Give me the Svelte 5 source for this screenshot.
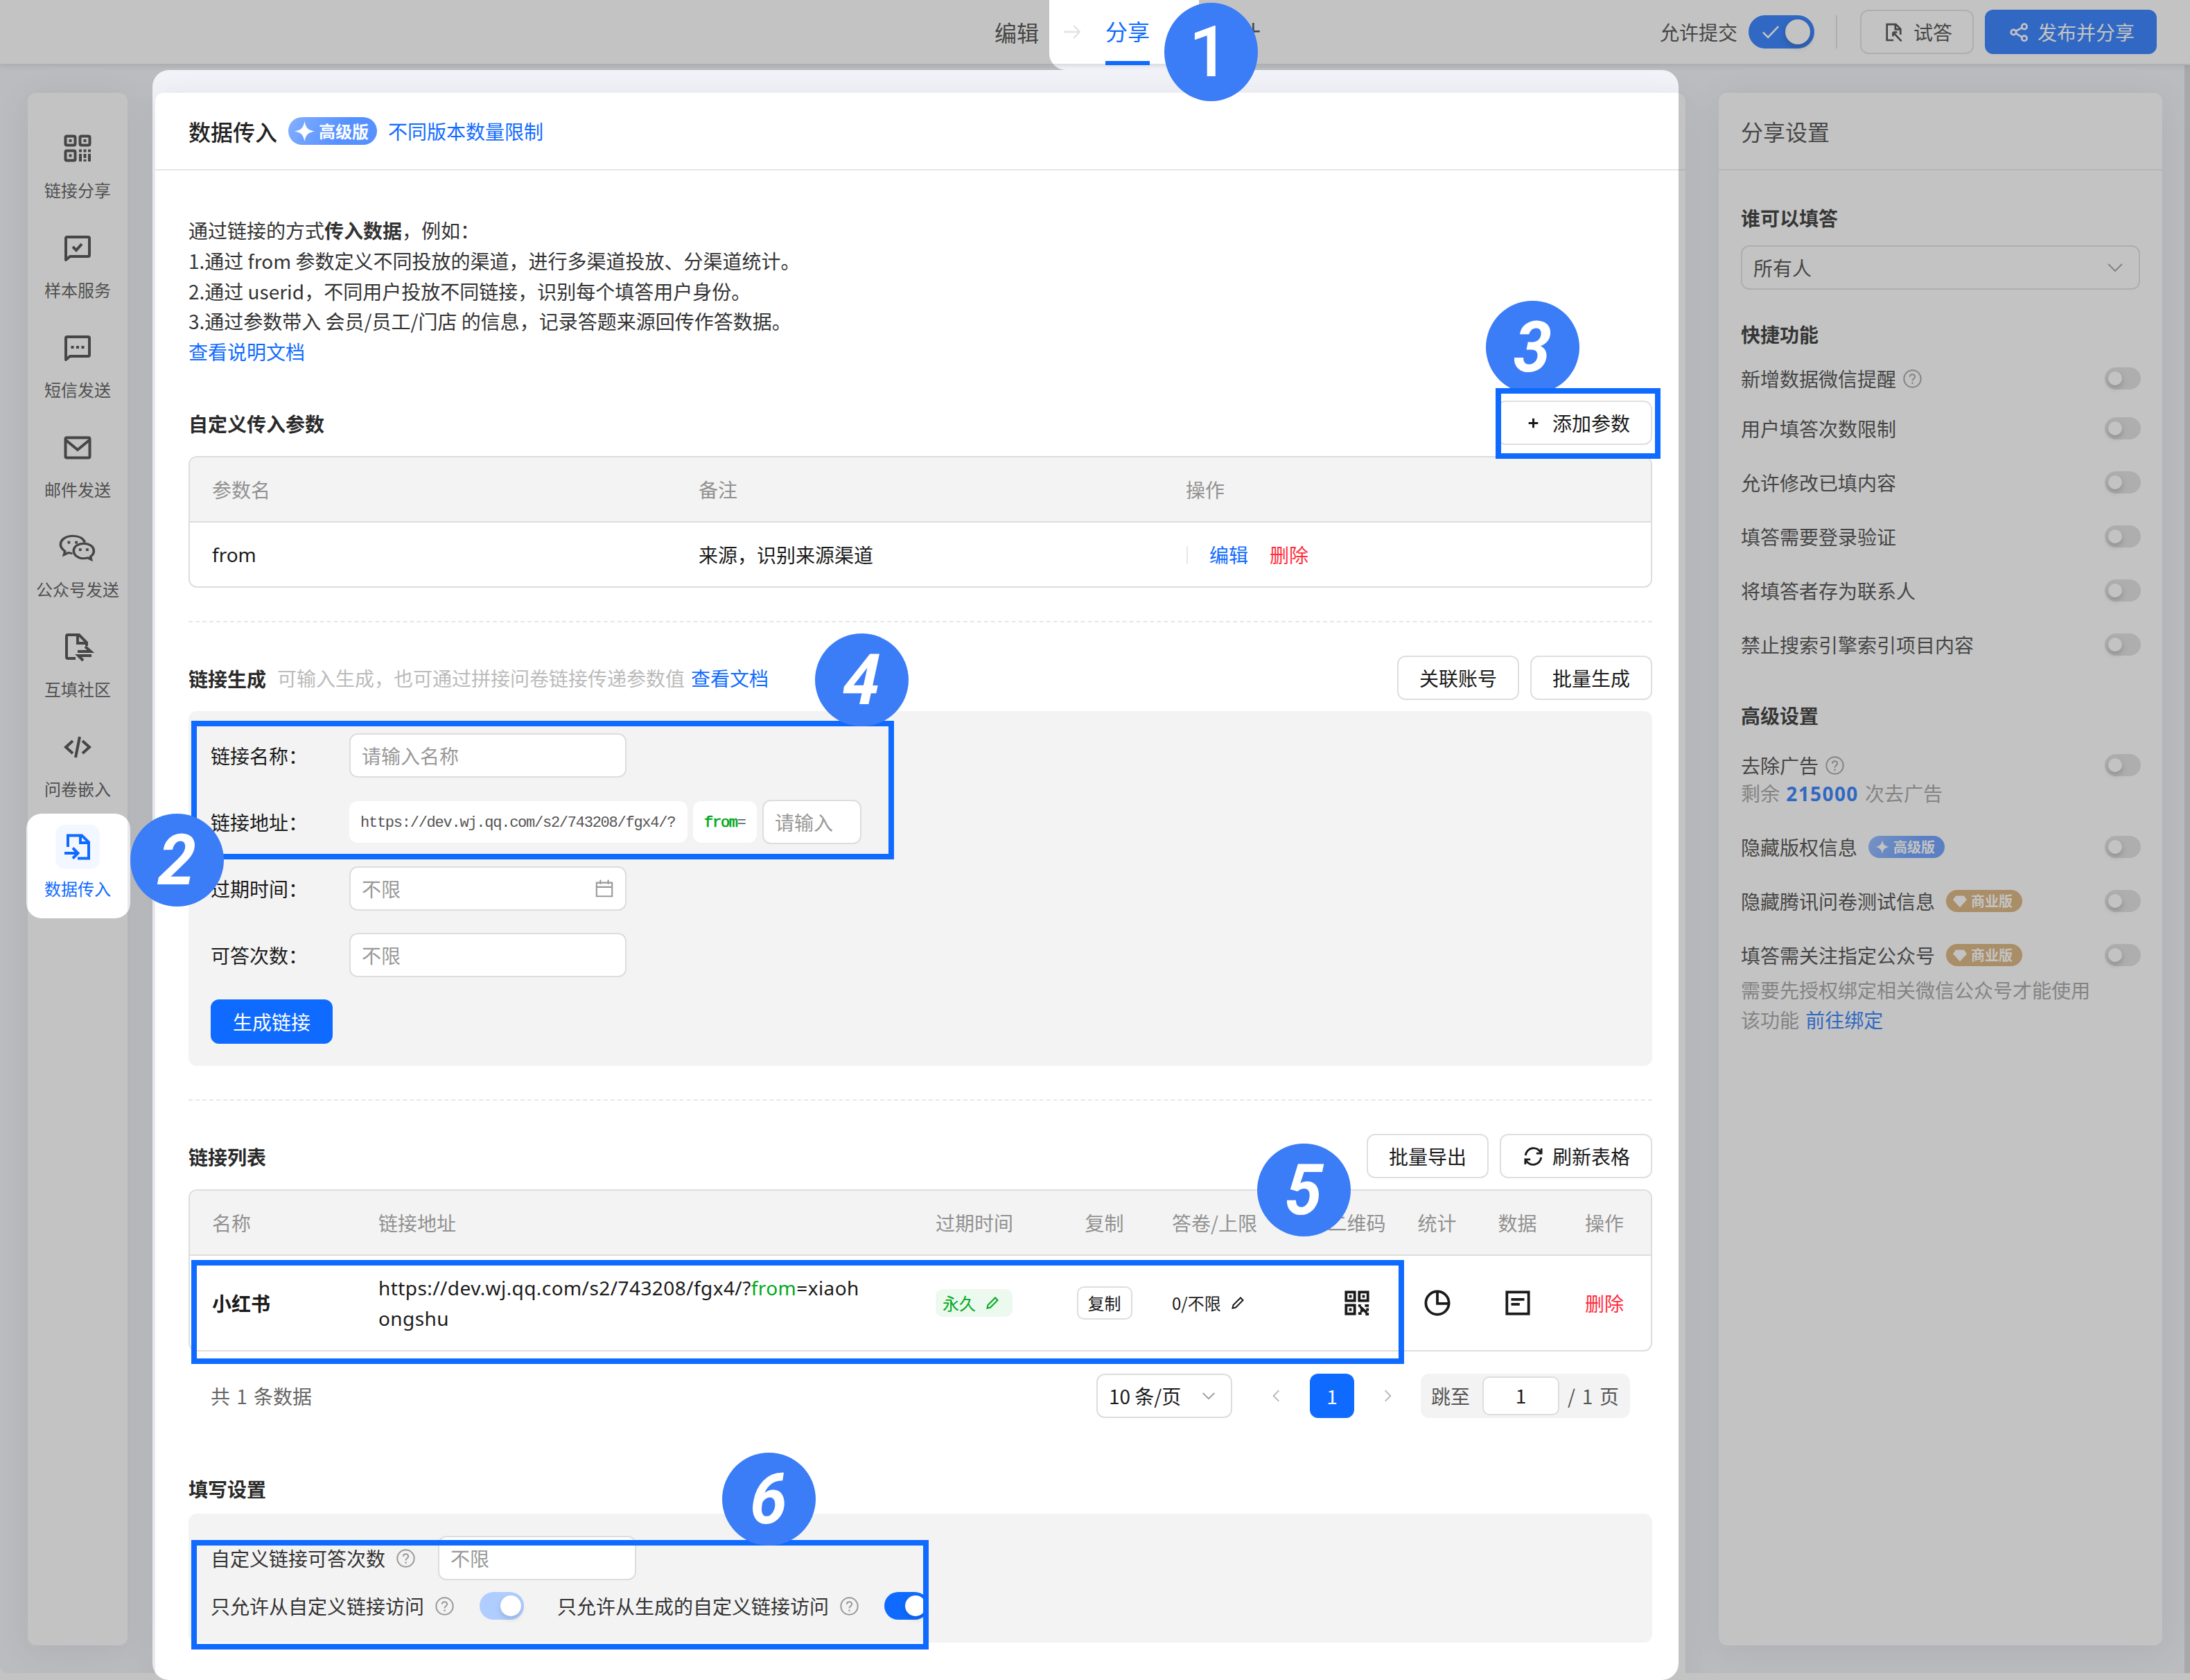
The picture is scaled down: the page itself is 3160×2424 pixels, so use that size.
<script>
  const nav = [
    { icon: 'qr', label: '链接分享' },
    { icon: 'check', label: '样本服务' },
    { icon: 'sms', label: '短信发送' },
    { icon: 'mail', label: '邮件发送' },
    { icon: 'wechat', label: '公众号发送' },
    { icon: 'swap', label: '互填社区' },
    { icon: 'code', label: '问卷嵌入' },
    { icon: 'import', label: '数据传入', active: true }
  ];
  const quick = [
    { label: '新增数据微信提醒', help: true },
    { label: '用户填答次数限制' },
    { label: '允许修改已填内容' },
    { label: '填答需要登录验证' },
    { label: '将填答者存为联系人' },
    { label: '禁止搜索引擎索引项目内容' }
  ];
</script>

{#snippet icon(name)}
  <svg class="ico" viewBox="0 0 40 40" fill="none" stroke="currentColor" stroke-width="4">
    {#if name === 'qr'}
      <rect x="2.500" y="2.500" width="14" height="13" rx="2" /><rect x="23.500" y="2.500" width="14" height="13" rx="2" /><rect x="2.500" y="23.500" width="14" height="14" rx="2" />
      <path d="M9.500 7v4M30.500 7v4M9.500 28.500v4M24 21.500v4M30.500 21.500v4M37 21.500v4M24 28v11M30.500 28v6M37 28v11M30.500 36v3" />
    {:else if name === 'check'}
      <path d="M3 37V6a2 2 0 0 1 2-2h30a2 2 0 0 1 2 2v24a2 2 0 0 1-2 2H9z" stroke-linejoin="round" /><path d="M13 18l5 5 8-9" />
    {:else if name === 'sms'}
      <path d="M3 37V6a2 2 0 0 1 2-2h30a2 2 0 0 1 2 2v24a2 2 0 0 1-2 2H9z" stroke-linejoin="round" /><path d="M10.500 19h4M18 19h4M25.500 19h4" stroke-width="4" />
    {:else if name === 'mail'}
      <rect x="2.500" y="5.500" width="35" height="29" rx="2" /><path d="M3 9l17 14L37 9" />
    {:else if name === 'wechat'}
      <g transform="translate(-4 0) scale(1.200 1)" stroke-width="2.900">
        <path d="M14 28c-1.500 0-3-.3-4.500-.9L4.500 30l1-4.800C2.500 22.500.500 19.500.500 16 .500 9 6.500 4 14.500 4c6.500 0 12 3 13.800 9" />
        <path d="M27 14.500c-6.500 0-11.500 4.200-11.500 10S20.500 35 27 35c1.500 0 3-.3 4.500-.8l4 2.300-.8-4c2.400-2 3.800-4.800 3.800-7.800 0-6-5-10.200-11.500-10.200z" />
        <path d="M8.500 13h3M17 13h3M21.500 23h3M29.500 23h3" stroke-width="3.500" />
      </g>
    {:else if name === 'swap'}
      <path d="M17 36H6a2 2 0 0 1-2-2V4a2 2 0 0 1 2-2h16l11 11v5M20 2v12h13" /><path d="M20 26h19l-8-7M40 32H21l7 7" />
    {:else if name === 'code'}
      <path d="M13 11L3 20l10 9M27 11l10 9-10 9M23 5l-6 30" />
    {:else if name === 'import'}
      <path d="M6 20V3.500h20l10 9.500v23.500H20M24 3v11h12M1 29h19M13 21.500l7.500 7.500-7.500 7.500" />
    {:else if name === 'qr2'}
      <rect x="3.500" y="3.500" width="13" height="13" /><rect x="23.500" y="3.500" width="13" height="13" /><rect x="3.500" y="23.500" width="13" height="13" />
      <path d="M10 8v4M30 8v4M10 28v4M22 24h4M32 24h6M25 26l10 9M22 36h5M27 30v4M33 37h5M36 28v4" />
    {:else if name === 'pie'}
      <circle cx="20" cy="20" r="17.500" /><path d="M20 3v18h17" />
    {:else if name === 'doc'}
      <rect x="3.500" y="3.500" width="33" height="33" /><path d="M10 14.500h20M10 22h13" />
    {:else if name === 'pencil'}
      <path d="M5 35l2-9L28 5l7 7-21 21z" />
    {:else if name === 'refresh'}
      <path d="M36 4v10H26M4 36V26h10" /><path d="M4.500 18A16 16 0 0 1 35 13M35.500 22A16 16 0 0 1 5 27" />
    {:else if name === 'calendar'}
      <path d="M4 8h32v28H4zM4 17h32M12 2v9M28 2v9" />
    {:else if name === 'down'}
      <path d="M6 13l14 14 14-14" />
    {:else if name === 'left'}
      <path d="M26 6L12 20l14 14" />
    {:else if name === 'right'}
      <path d="M14 6l14 14-14 14" />
    {:else if name === 'arrow'}
      <path d="M0 20h37M24 5l14 15-14 15" />
    {:else if name === 'plus'}
      <path d="M20 4v32M4 20h32" stroke-width="7" />
    {:else if name === 'tick'}
      <path d="M3 21l11 11L37 8" />
    {:else if name === 'try'}
      <path d="M18 37H4V3h19l10 10v12M22 3v11h11M17 20l18 19M17 20h9M17 20v9" />
    {:else if name === 'share'}
      <circle cx="8" cy="20" r="5.500" /><circle cx="31" cy="8" r="5.500" /><circle cx="31" cy="33" r="5.500" /><path d="M13 17.500l13-7M13 22.500l13 8" />
    {:else if name === 'help'}
      <circle cx="20" cy="20" r="18" stroke-width="3" /><path d="M14.500 16c0-7 11-7 11-.5 0 4-5.500 4.500-5.500 9M20 27.500v3.500" stroke-width="3" />
    {/if}
  </svg>
{/snippet}

{#snippet badge(kind, text)}
  <span class="badge {kind}">
    <svg viewBox="0 0 24 24" fill="#fff">
      {#if kind === 'biz'}<path d="M5 3h14l5 7-12 13L0 10z" />{:else}<path d="M12 0c1.500 8 4 10.500 12 12-8 1.500-10.500 4-12 12-1.500-8-4-10.500-12-12 8-1.500 10.500-4 12-12z" />{/if}
    </svg>{text}
  </span>
{/snippet}

{#snippet help()}<i class="help">{@render icon('help')}</i>{/snippet}

<div class="app">
  <header class="top">
    <nav class="tabs">
      <span>编辑</span><i class="sep">{@render icon('arrow')}</i><span class="on">分享</span><i class="sep">{@render icon('arrow')}</i><span>统计</span>
    </nav>
    <div class="tools">
      <span class="allow">允许提交</span>
      <span class="bigswitch">{@render icon('tick')}<b></b></span>
      <span class="vline"></span>
      <button class="btn try">{@render icon('try')}试答</button>
      <button class="btn primary pub">{@render icon('share')}发布并分享</button>
    </div>
  </header>

  <div class="body">
    <aside class="side card">
      {#each nav as n}
        <div class="item" class:active={n.active}>
          <span class="pic {n.icon}">{@render icon(n.icon)}</span>
          <span class="lbl">{n.label}</span>
        </div>
      {/each}
    </aside>

    <main class="main card">
      <div class="head"><span class="title">数据传入</span>{@render badge('adv', '高级版')}<a>不同版本数量限制</a></div>
      <div class="content">
        <div class="desc">
          <p>通过链接的方式<b>传入数据</b>，例如：</p>
          <p>1.通过 from 参数定义不同投放的渠道，进行多渠道投放、分渠道统计。</p>
          <p>2.通过 userid，不同用户投放不同链接，识别每个填答用户身份。</p>
          <p>3.通过参数带入 会员/员工/门店 的信息，记录答题来源回传作答数据。</p>
          <p><a>查看说明文档</a></p>
        </div>

        <div class="bar"><h3>自定义传入参数</h3><button class="btn add">{@render icon('plus')}添加参数</button></div>
        <div class="table t1">
          <div class="tr th"><span>参数名</span><span>备注</span><span>操作</span></div>
          <div class="tr"><span class="lat">from</span><span>来源，识别来源渠道</span><span class="ops"><i></i><a>编辑</a><a class="red">删除</a></span></div>
        </div>

        <div class="dash"></div>
        <div class="bar">
          <h3>链接生成</h3><span class="hint">可输入生成，也可通过拼接问卷链接传递参数值</span><a>查看文档</a>
          <button class="btn push">关联账号</button><button class="btn">批量生成</button>
        </div>
        <div class="panel form">
          <div class="row"><label>链接名称：</label><div class="input w400">请输入名称</div></div>
          <div class="row"><label>链接地址：</label><div class="url">https://dev.wj.qq.com/s2/743208/fgx4/?</div><div class="url from"><em>from</em>=</div><div class="input w143">请输入</div></div>
          <div class="row"><label>过期时间：</label><div class="input w400">不限{@render icon('calendar')}</div></div>
          <div class="row"><label>可答次数：</label><div class="input w400">不限</div></div>
          <div class="row"><button class="btn primary">生成链接</button></div>
        </div>

        <div class="dash"></div>
        <div class="bar"><h3>链接列表</h3><button class="btn push">批量导出</button><button class="btn refresh">{@render icon('refresh')}刷新表格</button></div>
        <div class="table t2">
          <div class="tr th"><span>名称</span><span>链接地址</span><span>过期时间</span><span class="c">复制</span><span class="quota">答卷/上限</span><span class="c">二维码</span><span class="c">统计</span><span class="c">数据</span><span class="c">操作</span></div>
          <div class="tr">
            <b>小红书</b>
            <span class="lat link">https://dev.wj.qq.com/s2/743208/fgx4/?<em>from</em>=xiaoh<br />ongshu</span>
            <span class="exp"><span class="tag">永久{@render icon('pencil')}</span></span>
            <span class="c"><button class="mini">复制</button></span>
            <span class="quota small">0/不限{@render icon('pencil')}</span>
            <span class="c">{@render icon('qr2')}</span>
            <span class="c">{@render icon('pie')}</span>
            <span class="c">{@render icon('doc')}</span>
            <span class="c"><a class="red">删除</a></span>
          </div>
        </div>
        <div class="pager">
          <span class="total">共 1 条数据</span>
          <div class="input size">10 条/页{@render icon('down')}</div>
          <span class="pg">{@render icon('left')}</span><span class="pg cur">1</span><span class="pg">{@render icon('right')}</span>
          <div class="jump"><span>跳至</span><span class="num">1</span><span class="pages">/ 1 页</span></div>
        </div>

        <h3 class="last">填写设置</h3>
        <div class="panel settings">
          <div class="srow"><span>自定义链接可答次数</span>{@render help()}<div class="input w286">不限</div></div>
          <div class="srow"><span>只允许从自定义链接访问</span>{@render help()}<i class="switch soft"></i><span class="second">只允许从生成的自定义链接访问</span>{@render help()}<i class="switch"></i></div>
        </div>
      </div>
    </main>

    <aside class="right card">
      <div class="head"><span class="title thin">分享设置</span></div>
      <div class="rbody">
        <h4>谁可以填答</h4>
        <div class="input everyone">所有人{@render icon('down')}</div>
        <h4 class="q">快捷功能</h4>
        {#each quick as q, i}
          <div class="opt" class:first={i === 0}><span>{q.label}</span>{#if q.help}{@render help()}{/if}<i class="off"></i></div>
        {/each}
        <h4 class="a">高级设置</h4>
        <div class="opt tight"><span>去除广告</span>{@render help()}<i class="off"></i></div>
        <p class="note">剩余 <b>215000</b> 次去广告</p>
        <div class="opt gap"><span>隐藏版权信息</span>{@render badge('adv', '高级版')}<i class="off"></i></div>
        <div class="opt"><span>隐藏腾讯问卷测试信息</span>{@render badge('biz', '商业版')}<i class="off"></i></div>
        <div class="opt"><span>填答需关注指定公众号</span>{@render badge('biz', '商业版')}<i class="off"></i></div>
        <p class="note bind">需要先授权绑定相关微信公众号才能使用该功能 <a>前往绑定</a></p>
      </div>
    </aside>
  </div>
  <div class="scroll"></div>

  <svg class="dim" viewBox="0 0 3160 2424">
    <path fill-rule="evenodd" fill="#646464" fill-opacity="0.39" d="M0 0H3160V2424H0ZM1514 0V77a24 24 0 0 0 24 24H1706a24 24 0 0 0 24-24V0ZM244 101H2398a24 24 0 0 1 24 24V2400a24 24 0 0 1-24 24H244a24 24 0 0 1-24-24V125a24 24 0 0 1 24-24ZM60 1174H166a22 22 0 0 1 22 22V1303a22 22 0 0 1-22 22H60a22 22 0 0 1-22-22V1196a22 22 0 0 1 22-22Z" />
  </svg>

  <div class="step s3"><span>3</span></div>
  <div class="mark m3"></div>
  <div class="mark m4"></div>
  <div class="mark m5"></div>
  <div class="mark m6"></div>
  <div class="step s1"><span>1</span></div>
  <div class="step s2"><span>2</span></div>
  <div class="step s4"><span>4</span></div>
  <div class="step s5"><span>5</span></div>
  <div class="step s6"><span>6</span></div>
</div>

<style>
  :global(body) { margin: 0; }
  .app {
    position: relative; width: 3160px; height: 2424px; overflow: hidden;
    display: flex; flex-direction: column; background: #fff;
    font: 28px/44px "Noto Sans CJK SC", sans-serif; color: #1a1a1a;
  }
  .app *, .app { box-sizing: border-box; }
  p, h3, h4 { margin: 0; font-size: 28px; line-height: 44px; }
  i, em { font-style: normal; }
  a { color: #0f6bff; }
  .red { color: #ff2e3c; }
  .ico { display: block; width: 40px; height: 40px; flex: none; overflow: visible; }
  .card { background: #fff; border-radius: 12px; box-shadow: 0 8px 48px rgba(30, 35, 50, .09); }

  .top { flex: none; height: 92px; background: #fff; display: flex; align-items: center; position: relative; z-index: 1; box-shadow: 0 2px 8px rgba(40, 40, 60, .16); }
  .tabs { display: flex; align-items: center; margin-left: 1435px; font-size: 32px; height: 92px; color: #333; }
  .sep { width: 96px; display: flex; justify-content: center; color: #e2e2e2; }
  .sep .ico { width: 24px; height: 24px; }
  .on { color: #0f6bff; height: 94px; line-height: 88px; border-bottom: 6px solid #0f6bff; margin-top: 2px; }
  .tools { display: flex; align-items: center; margin-left: auto; margin-right: 48px; color: #333; }
  .bigswitch { width: 95px; height: 48px; border-radius: 24px; background: #0f6bff; margin-left: 16px; display: flex; align-items: center; padding: 0 6px 0 19px; justify-content: space-between; color: #fff; }
  .bigswitch .ico { width: 26px; height: 26px; }
  .bigswitch b { width: 36px; height: 36px; border-radius: 50%; background: #fff; box-shadow: 0 4px 8px rgba(0, 0, 0, .3); }
  .vline { width: 2px; height: 48px; background: #ddd; margin: 0 33px 0 31px; }
  .btn { height: 64px; padding: 0 30px; border: 2px solid #dfdfdf; border-radius: 12px; background: #fff; color: #1a1a1a; font: inherit; line-height: 56px; display: flex; align-items: center; white-space: nowrap; }
  .btn.primary { background: #0f6bff; border-color: #0f6bff; color: #fff; }
  .try { width: 164px; padding: 0 30px 0 34px; gap: 14px; color: #333; }
  .try .ico, .pub .ico { width: 27px; height: 27px; }
  .pub { width: 248px; margin-left: 16px; padding: 0 30px 0 34px; gap: 13px; }

  .body { display: flex; align-items: flex-start; padding: 42px 0 0 40px; height: 2322px; overflow: hidden; background: #f1f3f8; border-radius: 0 0 12px 12px; flex: none; }
  .side { width: 144px; height: 2240px; padding-top: 48px; flex: none; }
  .item { height: 144px; display: flex; flex-direction: column; align-items: center; color: #333; }
  .pic { width: 64px; height: 64px; border-radius: 14px; display: flex; align-items: center; justify-content: center; }
  .pic.wechat .ico { width: 42px; height: 42px; }
  .lbl { font-size: 24px; line-height: 36px; margin-top: 10px; white-space: nowrap; color: #444; }
  .active, .active .lbl { color: #0f6bff; }
  .active .pic { background: #f3f7ff; }

  .main { width: 2208px; height: 2400px; margin-left: 40px; flex: none; }
  .head { height: 112px; border-bottom: 2px solid #e7e7e7; padding: 0 48px; display: flex; align-items: center; }
  .title { font-size: 32px; font-weight: 500; color: #222; }
  .thin { font-weight: 400; color: #333; }
  .badge { display: inline-flex; align-items: center; color: #fff; font-weight: 700; border-radius: 20px; white-space: nowrap; }
  .main .badge { width: 128px; height: 40px; margin: 0 16px 0 16px; padding-left: 9px; font-size: 24px; gap: 6px; }
  .main .badge svg { width: 29px; height: 29px; }
  .adv { background: linear-gradient(120deg, #83b0ff, #5591ff 60%); }
  .biz { background: #d5a86b; }
  .right .badge { width: 110px; height: 32px; margin-left: 16px; padding-left: 10px; font-size: 20px; gap: 6px; }
  .right .badge svg { width: 20px; height: 20px; }
  .content { padding: 64px 48px 0; }
  .desc { height: 220px; color: #333; margin-bottom: 48px; }
  .desc p { height: 43.800px; }
  .bar { height: 64px; display: flex; align-items: center; margin-bottom: 16px; }
  .bar h3, .last { color: #2a2a2a; }
  .bar h3 { margin-top: 2px; }
  .add { margin-left: auto; padding-left: 42px; gap: 19px; }
  .add .ico { width: 17px; height: 17px; }
  .push { margin-left: auto; margin-right: 16px; }
  .hint { color: #bbb; margin: 0 9px 0 16px; }

  .table { border: 2px solid #ddd; border-radius: 12px; overflow: hidden; }
  .tr { display: grid; align-items: center; padding-left: 32px; }
  .th { height: 94px; background: #f3f3f3; border-bottom: 2px solid #ddd; color: #919191; }
  .t1 .tr { grid-template-columns: 702px 703px 1fr; }
  .t1 .tr:last-child { height: 92px; }
  .ops { display: flex; align-items: center; }
  .ops i { width: 2px; height: 26px; background: #e7e7e7; margin: 2px 31px 0 1px; }
  .ops .red { margin-left: 31px; }
  .lat { font-family: "Noto Sans", sans-serif; }
  .link { letter-spacing: .42px; }
  .dash { border-top: 2px dashed #e7e7e7; margin: 48px 0; }

  .panel { background: #f3f3f3; border-radius: 12px; }
  .form { padding: 32px; display: flex; flex-direction: column; gap: 32px; height: 512px; }
  .row { display: flex; align-items: center; height: 64px; }
  .row label { width: 200px; }
  .input { height: 64px; border: 2px solid #ddd; border-radius: 12px; background: #fff; padding: 0 16px; color: #999; line-height: 56px; display: flex; align-items: center; justify-content: space-between; }
  .w400 { width: 400px; }
  .w143 { width: 143px; margin-left: 8px; }
  .w286 { width: 286px; margin-left: 33px; }
  .input .ico { width: 28px; height: 28px; stroke-width: 3; }
  .url { height: 60px; width: 488px; border-radius: 12px; background: #fff; padding: 2px 16px 0; font: 22px/60px "Liberation Mono", monospace; letter-spacing: -1.250px; color: #555; white-space: nowrap; }
  .url.from { width: 92px; margin-left: 8px; }
  em { color: #00a91c; }
  .url em { -webkit-text-stroke: .7px #00a91c; }
  .refresh { padding-left: 32px; gap: 13px; }
  .refresh .ico { width: 29px; height: 29px; }

  .t2 .tr { grid-template-columns: 240px 804px 184px 119px 246px 117px 115px 117px 134px; }
  .t2 .tr:last-child { height: 136px; }
  .c { display: flex; justify-content: center; }
  .quota { padding-left: 38px; display: flex; align-items: center; }
  .c .ico { width: 38px; height: 38px; }
  .exp { display: flex; }
  .tag { display: inline-flex; align-items: center; width: 111px; height: 40px; padding-left: 10px; border-radius: 10px; background: #ecf9ee; color: #00a91c; font-size: 24px; gap: 14px; }
  .tag .ico, .small .ico { width: 20px; height: 20px; }
  .small { font-size: 24px; gap: 14px; }
  .mini { width: 80px; height: 48px; border: 2px solid #ddd; border-radius: 10px; background: #fff; font: inherit; font-size: 24px; line-height: 40px; padding: 0; color: #1a1a1a; }

  .pager { display: flex; align-items: center; height: 64px; margin: 32px 32px 0; color: #1a1a1a; }
  .total { color: #666; margin-right: auto; word-spacing: 3px; }
  .size { width: 196px; color: #1a1a1a; padding-right: 20px; margin-right: 32px; }
  .size .ico { width: 24px; height: 24px; color: #999; }
  .pg { width: 64px; height: 64px; display: flex; align-items: center; justify-content: center; border-radius: 12px; color: #bbb; margin-right: 16px; }
  .pg .ico { width: 22px; height: 22px; stroke-width: 3.500; }
  .cur { background: #0f6bff; color: #fff; }
  .jump { width: 302px; height: 64px; border-radius: 12px; background: #f3f3f3; color: #555; display: flex; align-items: center; padding-left: 15px; }
  .num { width: 111px; height: 56px; line-height: 50px; border: 2px solid #ddd; border-radius: 10px; background: #fff; text-align: center; color: #1a1a1a; margin: 0 12px 0 18px; }
  .pages { word-spacing: 3.500px; }

  .last { margin: 80px 0 14px; }
  .settings { height: 186px; padding: 32px 32px 0; color: #333; }
  .srow { display: flex; align-items: center; height: 64px; }
  .srow + .srow { height: 40px; margin-top: 17px; }
  .help { color: #999; display: inline-flex; margin-left: 16px; }
  .help .ico { width: 27px; height: 27px; }
  .right .help { margin-left: 10px; }
  .switch { width: 64px; height: 40px; border-radius: 20px; background: #0f6bff; margin-left: 37px; padding: 4px; display: flex; justify-content: flex-end; }
  .switch::after { content: ""; width: 30px; height: 30px; margin-top: 1px; border-radius: 50%; background: #fff; box-shadow: 0 4px 8px rgba(0, 0, 0, .15); }
  .soft { background: #afceff; }
  .second { margin-left: 48px; }

  .right { width: 640px; height: 2240px; margin-left: 48px; flex: none; }
  .right .head { padding: 0 32px; }
  .rbody { padding: 46px 31px 0 32px; color: #333; }
  h4 { color: #1a1a1a; }
  .everyone { margin-top: 18px; color: #333; width: 576px; padding: 0 20px 0 16px; }
  .everyone .ico { color: #999; }
  .right .q { margin-top: 42px; }
  .right .a { margin-top: 64px; }
  .opt { height: 32px; margin-bottom: 46px; display: flex; align-items: center; white-space: nowrap; }
  .opt.first { margin: 26px 0 40px; }
  .opt.tight { margin: 34px 0 4px; }
  .opt.gap { margin-top: 39px; }
  .off { width: 52px; height: 32px; border-radius: 16px; background: #ddd; margin-left: auto; padding: 6px 5px; }
  .off::after { content: ""; display: block; width: 20px; height: 20px; border-radius: 50%; background: #fff; box-shadow: 0 4px 8px rgba(0, 0, 0, .25); }
  .note { color: #999; margin-top: -2px; word-spacing: 3px; margin-bottom: 2px; }
  .note b { color: #0f6bff; font-family: "Noto Sans", sans-serif; letter-spacing: 1.400px; }
  .bind { margin: -33px 0 0; line-height: 43px; width: 520px; }
  .scroll { position: absolute; right: 0; top: 94px; width: 8px; height: 2320px; background: #d3d3d6; }

  .dim { position: absolute; inset: 0; width: 3160px; height: 2424px; z-index: 2; }
  .mark { position: absolute; border: 8px solid #0f6bff; z-index: 3; }
  .m3 { left: 2158px; top: 560px; width: 238px; height: 102px; }
  .m4 { left: 276px; top: 1040px; width: 1014px; height: 200px; }
  .m5 { left: 276px; top: 1818px; width: 1750px; height: 150px; }
  .m6 { left: 276px; top: 2222px; width: 1064px; height: 158px; }
  .step { position: absolute; z-index: 3; width: 135px; height: 134px; border-radius: 50%; background: #3b7cf7; color: #fff; display: flex; align-items: center; justify-content: center; font: italic 700 102px/134px Roboto, sans-serif; }
  .step span { transform: skewX(-3deg) scaleX(.94); }
  .s1 { left: 1680px; top: 4px; height: 142px; font-style: normal; font-weight: 500; }
  .s1 span { transform: translateX(-3px); }
  .s2 { left: 188px; top: 1174px; }
  .s3 { left: 2144px; top: 434px; }
  .s4 { left: 1176px; top: 914px; }
  .s5 { left: 1814px; top: 1650px; }
  .s6 { left: 1042px; top: 2096px; }
</style>
